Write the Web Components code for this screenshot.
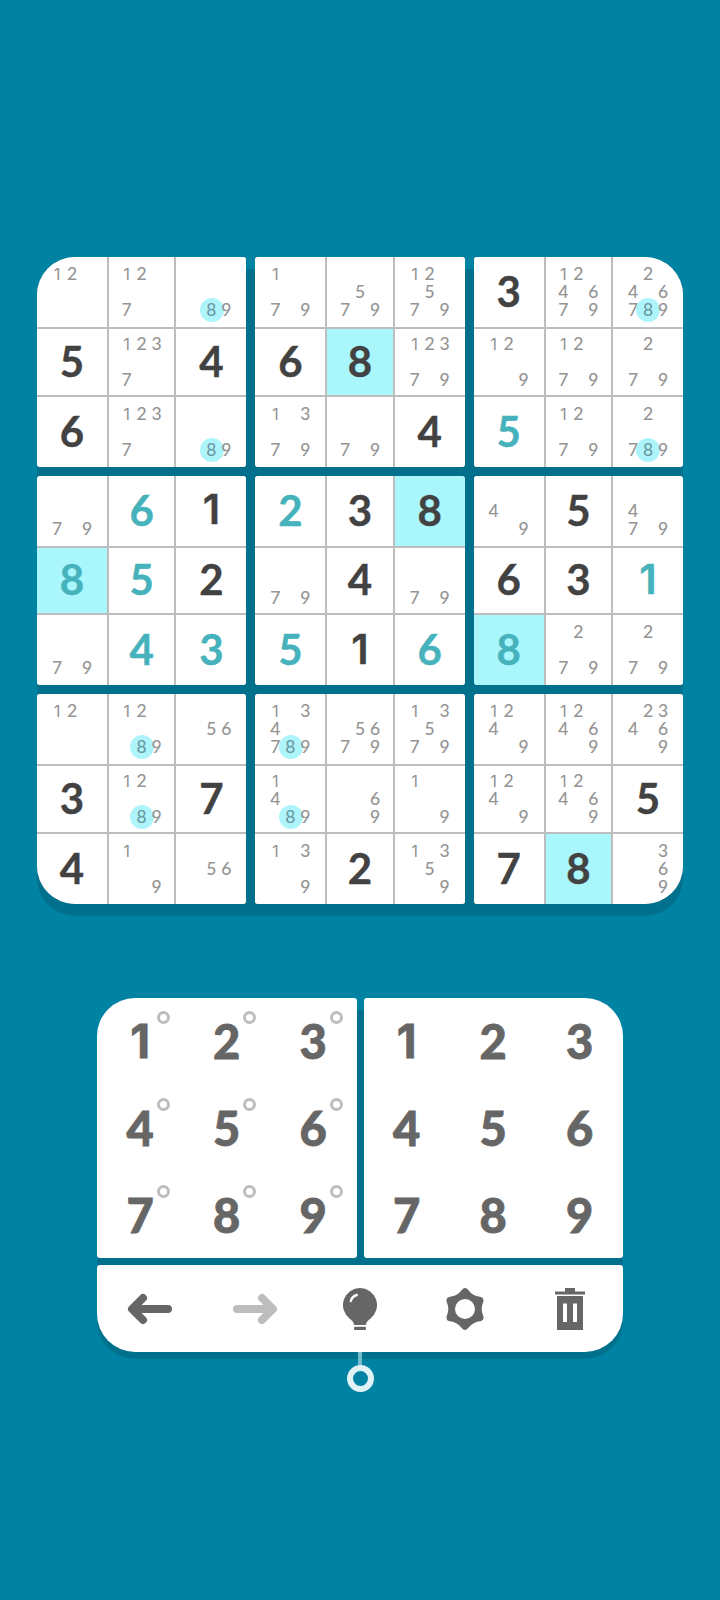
<!DOCTYPE html>
<html>
<head>
<meta charset="utf-8">
<title>Sudoku</title>
<style>
  html, body { margin: 0; padding: 0; }
  body {
    width: 720px;
    height: 1600px;
    overflow: hidden;
    background: #0083a3;
    font-family: 'Lato', 'Noto Sans', sans-serif;
  }
  main { display: block; padding: 257px 37px 0; }
</style>
</head>
<body>
<main>
  <sudoku-board></sudoku-board>
  <sudoku-controls></sudoku-controls>
</main>
<script>
const RADIUS = 38;

// a digit = given, t = teal entry, h = highlighted cell, p = pencil marks (* rings the digit)
const PUZZLE = [
  ['p12', 'p127', 'p*89', 'p179', 'p579', 'p12579', '3', 'p124679', 'p2467*89'],
  ['5', 'p1237', '4', '6', 'h8', 'p12379', 'p129', 'p1279', 'p279'],
  ['6', 'p1237', 'p*89', 'p1379', 'p79', '4', 't5', 'p1279', 'p27*89'],
  ['p79', 't6', '1', 't2', '3', 'h8', 'p49', '5', 'p479'],
  ['H8', 't5', '2', 'p79', '4', 'p79', '6', '3', 't1'],
  ['p79', 't4', 't3', 't5', '1', 't6', 'H8', 'p279', 'p279'],
  ['p12', 'p12*89', 'p56', 'p1347*89', 'p5679', 'p13579', 'p1249', 'p12469', 'p23469'],
  ['3', 'p12*89', '7', 'p14*89', 'p69', 'p19', 'p1249', 'p12469', '5'],
  ['4', 'p19', 'p56', 'p139', '2', 'p1359', '7', 'h8', 'p369']
];

class SudokuCell extends HTMLElement {
  constructor() {
    super();
    this.attachShadow({ mode: 'open' });
  }

  connectedCallback() {
    this.render();
  }

  render() {
    const value = this.getAttribute('value');
    const kind = value[0];
    let inner;
    if (kind === 'p') {
      const marks = value.slice(1);
      const slots = [];
      for (let n = 1; n <= 9; n++) {
        const at = marks.indexOf(n);
        const ringed = marks[at - 1] === '*';
        const cls = (ringed ? 'ring ' : '') + (n === 1 ? 'one' : '');
        slots.push(at < 0 ? '<span></span>' : `<span class="${cls}">${n}</span>`);
      }
      inner = `<div class="notes">${slots.join('')}</div>`;
    } else {
      const digit = value[value.length - 1];
      inner = `<div class="big ${digit === '1' ? 'one' : ''}">${digit}</div>`;
    }
    const cls = { t: 'teal', h: 'hl', H: 'hl teal' }[kind] || '';
    this.shadowRoot.innerHTML = `
      <style>
        :host { display: block; background: #fff; min-width: 0; min-height: 0; }
        .box { height: 100%; display: flex; align-items: center; justify-content: center; }
        .hl { background: #a9f6fc; }
        .one { font-family: 'Inter', sans-serif; }
        .big {
          font-size: 42px;
          font-weight: 700;
          line-height: 1;
          color: #424242;
          margin-top: -2px;
          -webkit-text-stroke: 0.4px currentColor;
        }
        .big.one { font-size: 41px; font-weight: 600; }
        .teal .big { color: #46b2bc; }
        .notes {
          display: grid;
          grid-template-columns: repeat(3, 15px);
          grid-template-rows: repeat(3, 18px);
          font-size: 17.500px;
          font-weight: 500;
          line-height: 18px;
          text-align: center;
          color: #949494;
        }
        .notes .one { font-size: 16.500px; font-weight: 400; }
        .notes span { position: relative; z-index: 1; }
        .ring { color: #6c9aa3; }
        .ring::before {
          content: '';
          position: absolute;
          z-index: -1;
          left: -4px;
          top: -3px;
          width: 24px;
          height: 24px;
          border-radius: 50%;
          background: #aef4fb;
        }
      </style>
      <div class="box ${cls}">${inner}</div>
    `;
  }
}

class SudokuBlock extends HTMLElement {
  constructor() {
    super();
    this.attachShadow({ mode: 'open' });
    this.shadowRoot.innerHTML = `
      <style>
        :host {
          display: grid;
          grid-template-columns: 70px 1fr 70px;
          grid-template-rows: 70px 1fr 70px;
          gap: 2px;
          background: #bdbdbd;
          border-radius: 3px;
          overflow: hidden;
        }
      </style>
      <slot></slot>
    `;
  }
}

class SudokuBoard extends HTMLElement {
  constructor() {
    super();
    this.attachShadow({ mode: 'open' });
  }

  connectedCallback() {
    this.shadowRoot.innerHTML = `
      <style>
        :host {
          display: grid;
          grid-template-columns: repeat(3, 1fr);
          grid-template-rows: repeat(3, 1fr);
          gap: 9px;
          height: 647px;
          position: relative;
          z-index: 0;
        }
        :host::before {
          content: '';
          position: absolute;
          z-index: -1;
          left: 0; right: 0; top: 12px; bottom: -12px;
          border-radius: ${RADIUS}px;
          background: #00708d;
        }
        sudoku-block:nth-of-type(1) { border-top-left-radius: ${RADIUS}px; }
        sudoku-block:nth-of-type(3) { border-top-right-radius: ${RADIUS}px; }
        sudoku-block:nth-of-type(7) { border-bottom-left-radius: ${RADIUS}px; }
        sudoku-block:nth-of-type(9) { border-bottom-right-radius: ${RADIUS}px; }
      </style>
    `;
    for (let b = 0; b < 9; b++) {
      const block = document.createElement('sudoku-block');
      const top = Math.floor(b / 3) * 3;
      const left = (b % 3) * 3;
      for (let r = 0; r < 3; r++) {
        for (let c = 0; c < 3; c++) {
          const cell = document.createElement('sudoku-cell');
          cell.setAttribute('value', PUZZLE[top + r][left + c]);
          block.appendChild(cell);
        }
      }
      this.shadowRoot.appendChild(block);
    }
  }
}

class NumberPad extends HTMLElement {
  constructor() {
    super();
    this.attachShadow({ mode: 'open' });
  }

  connectedCallback() {
    const pencil = this.hasAttribute('pencil');
    const keys = [1, 2, 3, 4, 5, 6, 7, 8, 9]
      .map(n => `<div class="key ${n === 1 ? 'one' : ''}">${n}${pencil ? '<i></i>' : ''}</div>`)
      .join('');
    this.shadowRoot.innerHTML = `
      <style>
        :host {
          display: grid;
          grid-template-columns: repeat(3, 1fr);
          grid-template-rows: repeat(3, 1fr);
          height: 260px;
          background: #fff;
          border-radius: 3px;
        }
        :host([side="left"]) { border-top-left-radius: ${RADIUS}px; }
        :host([side="right"]) { border-top-right-radius: ${RADIUS}px; }
        .key {
          position: relative;
          display: flex;
          align-items: center;
          justify-content: center;
          font-size: 47px;
          font-weight: 900;
          color: #666;
          -webkit-text-stroke: 0.8px #666;
        }
        .one { font-family: 'Inter', sans-serif; font-weight: 700; font-size: 46px; }
        i {
          position: absolute;
          left: calc(50% + 16.500px);
          top: calc(50% - 30px);
          width: 13px;
          height: 13px;
          box-sizing: border-box;
          border: 3.500px solid #bdbdbd;
          border-radius: 50%;
        }
      </style>
      ${keys}
    `;
  }
}

class ToolBar extends HTMLElement {
  constructor() {
    super();
    this.attachShadow({ mode: 'open' });
    this.shadowRoot.innerHTML = `
      <style>
        :host {
          display: grid;
          grid-template-columns: repeat(5, 1fr);
          align-items: center;
          justify-items: center;
          height: 87px;
          background: #fff;
          border-radius: 3px 3px ${RADIUS}px ${RADIUS}px;
        }
        svg { display: block; }
      </style>
      <svg width="46" height="32" viewBox="0 0 46 32" fill="none" stroke="#666" stroke-width="8" stroke-linecap="round" stroke-linejoin="round">
        <path d="M41 16H6M16 5 5 16l11 11"/>
      </svg>
      <svg width="46" height="32" viewBox="0 0 46 32" fill="none" stroke="#bdbdbd" stroke-width="8" stroke-linecap="round" stroke-linejoin="round">
        <path d="M5 16h35M30 5l11 11-11 11"/>
      </svg>
      <svg width="36" height="44" viewBox="0 0 36 44">
        <path fill="#666" d="M18 1a17 17 0 0 1 10.500 30.400c-2.500 2-4.500 3.500-4.500 6.600H12c0-3.100-2-4.600-4.500-6.600A17 17 0 0 1 18 1z"/>
        <rect x="12" y="39.800" width="12" height="3.200" rx="1" fill="#666"/>
        <path fill="none" stroke="#fff" stroke-width="2.400" stroke-linecap="round" d="M8.800 14c.8-3 2.600-5 6-6"/>
      </svg>
      <svg width="40" height="42" viewBox="0 0 40 42">
        <path fill="#666" stroke="#666" stroke-width="8" stroke-linejoin="round" d="M20 4.300Q25.470 11.530 34.460 12.650 30.940 21 34.460 29.350 25.470 30.470 20 37.700 14.530 30.470 5.540 29.350 9.060 21 5.540 12.650 14.530 11.530 20 4.300z"/>
        <circle cx="20" cy="21" r="10" fill="#fff"/>
      </svg>
      <svg width="30" height="42" viewBox="0 0 30 42">
        <path fill="#666" fill-rule="evenodd" d="M10 0h10v3.500h10v3H0v-3h10zM2 8h26v34H2zm6 7.500v18.500h4V15.500zm10 0v18.500h4V15.500z"/>
      </svg>
    `;
  }
}

class SudokuControls extends HTMLElement {
  constructor() {
    super();
    this.attachShadow({ mode: 'open' });
    this.shadowRoot.innerHTML = `
      <style>
        :host {
          display: block;
          margin: 94px 60px 0;
          position: relative;
          z-index: 0;
        }
        :host::before {
          content: '';
          position: absolute;
          z-index: -1;
          left: 0; right: 0; top: 12px; height: 349px;
          border-radius: ${RADIUS}px;
          background: #00708d;
        }
        .pads { display: grid; grid-template-columns: 1fr 1fr; gap: 7px; margin-bottom: 7px; }
        .handle { display: flex; flex-direction: column; align-items: center; }
        .stem { width: 4px; height: 13px; background: #74bccd; }
        .knob {
          width: 27px;
          height: 27px;
          box-sizing: border-box;
          border: 6px solid #dff3f7;
          border-radius: 50%;
        }
      </style>
      <div class="pads">
        <number-pad pencil side="left"></number-pad>
        <number-pad side="right"></number-pad>
      </div>
      <tool-bar></tool-bar>
      <div class="handle"><div class="stem"></div><div class="knob"></div></div>
    `;
  }
}

customElements.define('sudoku-cell', SudokuCell);
customElements.define('sudoku-block', SudokuBlock);
customElements.define('sudoku-board', SudokuBoard);
customElements.define('number-pad', NumberPad);
customElements.define('tool-bar', ToolBar);
customElements.define('sudoku-controls', SudokuControls);
</script>
</body>
</html>
